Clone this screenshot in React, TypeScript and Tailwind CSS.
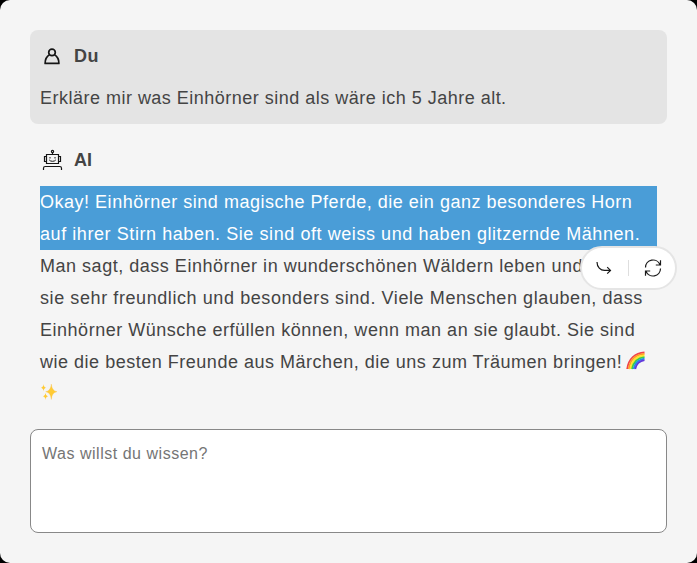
import React from "react";

function PersonIcon() {
  return (
    <svg width="24" height="24" viewBox="0 0 24 24" fill="none" stroke="#151515" strokeWidth="1.7" strokeLinejoin="round">
      <circle cx="12" cy="8.4" r="3.3" />
      <path d="M9.5 10.8C6.6 12.5 5.1 15 5.1 19.4H18.9C18.9 15 17.4 12.5 14.5 10.8" />
    </svg>
  );
}

function RobotIcon() {
  return (
    <svg width="24" height="24" viewBox="0 0 24 24" fill="none" stroke="#151515" strokeWidth="1.2">
      <circle cx="12.5" cy="3.5" r="1.1" />
      <path d="M12.5 4.5V6.5M6.5 6.5H18.5V15.5H6.5ZM6.5 8.5H4.5V13.5H6.5M18.5 8.5H20.5V13.5H18.5" />
      <path d="M10 9V10.5M15 9V10.5M9.2 11.9C10.6 13.8 14.4 13.8 15.8 11.9" strokeWidth="1" />
      <path d="M3.5 22V20.2Q3.5 18.5 5.2 18.5H19.8Q21.5 18.5 21.5 20.2V22" />
    </svg>
  );
}

function ReplyIcon() {
  return (
    <svg width="20" height="20" viewBox="0 0 20 20" fill="none" stroke="#181818" strokeWidth="1.2">
      <path d="M3 4C3 9 6.5 12.4 10.5 12.4H16.3M13.2 9.1L16.5 12.4L13.2 15.7" />
    </svg>
  );
}

function RefreshIcon() {
  return (
    <svg width="20" height="20" viewBox="0 0 20 20" fill="none" stroke="#181818" strokeWidth="1.2">
      <path d="M2.5 9.5A7.5 7.5 0 0 1 17 6.8M17.5 2.2V7H12.8" />
      <path d="M17.5 10.5A7.5 7.5 0 0 1 3 13.2M2.5 17.8V13H7.2" />
    </svg>
  );
}

function Rainbow() {
  return (
    <svg className="ml-[4px] inline-block align-[-2px]" width="19" height="19" viewBox="0 0 19 19" fill="none" strokeWidth="1.8">
      <path d="M1.2 18C2.5 8 9 2 18.5 1.3" stroke="#f0434b" />
      <path d="M2.8 18C4.1 9 10 3.6 18.5 2.9" stroke="#ff9b25" />
      <path d="M4.4 18C5.7 10 11 5.2 18.5 4.5" stroke="#ffe52c" />
      <path d="M6 18C7.2 11.2 12 6.8 18.5 6.1" stroke="#38cf48" />
      <path d="M7.6 18C8.7 12.3 12.7 8.4 18.5 7.7" stroke="#218bea" />
      <path d="M9.2 18C10.2 13.4 13.6 10 18.5 9.2" stroke="#6038dc" />
    </svg>
  );
}

function Sparkles() {
  return (
    <svg className="-mt-[5px]" width="18" height="18" viewBox="0 0 18 18" fill="#ffcb35">
      <path d="M11.3 1Q11.8 7.9 17 8.7Q11.8 9.5 11.3 16.5Q10.8 9.5 5.7 8.7Q10.8 7.9 11.3 1Z" stroke="#f7bd43" strokeWidth=".3" />
      <path d="M3.5 1Q3.7 4.3 6 4.7Q3.7 5.1 3.5 8.5Q3.3 5.1 1 4.7Q3.3 4.3 3.5 1Z" />
      <path d="M5.5 10Q5.7 13.1 8 13.5Q5.7 13.9 5.5 17Q5.3 13.9 3 13.5Q5.3 13.1 5.5 10Z" />
    </svg>
  );
}

export default function App() {
  return (
    <div className="h-[563px] w-[697px] bg-black font-['Liberation_Sans',Arial,sans-serif] text-[18px] leading-8 tracking-[0.5px] text-[#444]">
      <main className="flex h-full flex-col rounded-[10px] bg-[#f5f5f5] p-[30px]">
        <section className="h-[94px] rounded-lg bg-[#e4e4e4] px-2.5 pt-2.5">
          <header className="flex h-8 items-center gap-2.5">
            <PersonIcon />
            <h2 className="font-bold">Du</h2>
          </header>
          <p className="mt-2.5 whitespace-nowrap tracking-[0.49px]">Erkläre mir was Einhörner sind als wäre ich 5 Jahre alt.</p>
        </section>
        <section className="relative mt-5 h-[265px] px-2.5">
          <header className="flex h-8 items-center gap-2.5">
            <RobotIcon />
            <h2 className="font-bold tracking-normal">AI</h2>
          </header>
          <div className="mt-2.5 whitespace-nowrap">
            <div className="bg-[#4a9dd7] text-white">
              <p className="tracking-[0.515px]">Okay! Einhörner sind magische Pferde, die ein ganz besonderes Horn</p>
              <p className="tracking-[0.57px]">auf ihrer Stirn haben. Sie sind oft weiss und haben glitzernde Mähnen.</p>
            </div>
            <p className="tracking-[0.52px]">Man sagt, dass Einhörner in wunderschönen Wäldern leben und</p>
            <p className="tracking-[0.585px]">sie sehr freundlich und besonders sind. Viele Menschen glauben, dass</p>
            <p className="tracking-[0.52px]">Einhörner Wünsche erfüllen können, wenn man an sie glaubt. Sie sind</p>
            <p className="h-8 tracking-[0.515px]">wie die besten Freunde aus Märchen, die uns zum Träumen bringen!<Rainbow /></p>
            <div className="flex h-8 items-center"><Sparkles /></div>
          </div>
          <div className="absolute top-[102px] right-[-10px] flex h-11 w-[97px] items-center rounded-full border-2 border-[#e5e5e5] bg-white pl-3">
            <button aria-label="Antworten"><ReplyIcon /></button>
            <span className="ml-[14px] h-4 w-px bg-[#dedede]" />
            <button className="ml-[14px]" aria-label="Neu laden"><RefreshIcon /></button>
          </div>
        </section>
        <textarea
          className="mt-5 block h-[104px] w-full resize-none rounded-lg border border-[#888] bg-white px-[11px] py-3 text-[16px] leading-6 tracking-[0.52px] outline-none placeholder:text-[#757575]"
          placeholder="Was willst du wissen?"
        />
      </main>
    </div>
  );
}
